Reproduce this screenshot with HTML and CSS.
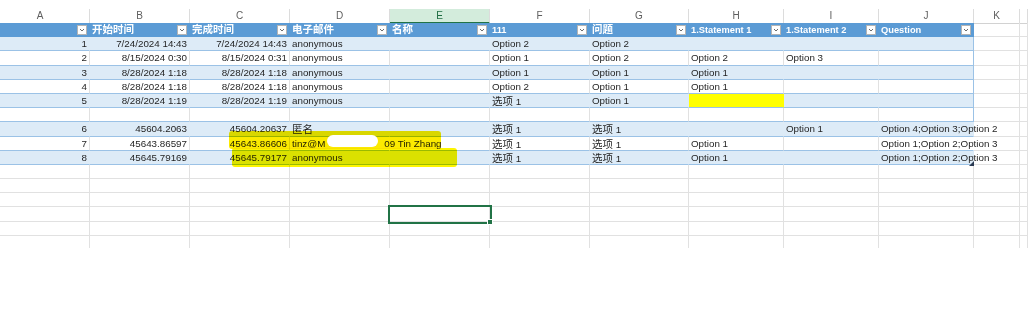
FILE: index.html
```html
<!DOCTYPE html>
<html lang="zh-CN">
<head>
    <meta charset="UTF-8">
    <meta name="viewport" content="width=device-width, initial-scale=1.0">
    <title>Form Responses</title>
    <link rel="stylesheet" href="styles.css">
</head>
<body>
    <div class="sheet">
        <div class="cols" id="cols"></div>
        <div class="grid" id="grid"></div>
        <div class="marker m7"></div>
        <div class="marker m8"></div>
        <div class="redact"></div>
        <svg class="grip" viewBox="0 0 5 5"><polygon points="5,0 5,5 0,5"/></svg>
    </div>

    <script>
        const letters = ['A', 'B', 'C', 'D', 'E', 'F', 'G', 'H', 'I', 'J', 'K', ''];
        const zh = s => `<span class="zh">${s}</span>`;
        const opt = zh('选项') + ' 1';

        const heads = ['', zh('开始时间'), zh('完成时间'), zh('电子邮件'), zh('名称'), '111', zh('问题'), '1.Statement 1', '1.Statement 2', 'Question'];
        const rows = [
            ['1', '7/24/2024 14:43', '7/24/2024 14:43', 'anonymous', '', 'Option 2', 'Option 2', '', '', ''],
            ['2', '8/15/2024 0:30', '8/15/2024 0:31', 'anonymous', '', 'Option 1', 'Option 2', 'Option 2', 'Option 3', ''],
            ['3', '8/28/2024 1:18', '8/28/2024 1:18', 'anonymous', '', 'Option 1', 'Option 1', 'Option 1', '', ''],
            ['4', '8/28/2024 1:18', '8/28/2024 1:18', 'anonymous', '', 'Option 2', 'Option 1', 'Option 1', '', ''],
            ['5', '8/28/2024 1:19', '8/28/2024 1:19', 'anonymous', '', opt, 'Option 1', '', '', ''],
            ['', '', '', '', '', '', '', '', '', ''],
            ['6', '45604.2063', '45604.20637', zh('匿名'), '', opt, opt, '', 'Option 1', 'Option 4;Option 3;Option 2'],
            ['7', '45643.86597', '45643.86606', 'tinz@M<span class="gap"></span>09 Tin Zhang', '', opt, opt, 'Option 1', '', 'Option 1;Option 2;Option 3'],
            ['8', '45645.79169', '45645.79177', 'anonymous', '', opt, opt, 'Option 1', '', 'Option 1;Option 2;Option 3']
        ];

        let colHtml = '';
        letters.forEach((l, i) => {
            colHtml += `<div class="col${i === 0 ? ' first' : ''}${l === 'E' ? ' on' : ''}">${l}</div>`;
        });
        document.getElementById('cols').innerHTML = colHtml;

        const filter = '<span class="filter"><svg viewBox="0 0 8 8"><polyline points="2,3 4,5 6,3"/></svg></span>';
        let html = '';
        heads.forEach(h => {
            html += `<div class="cell head"><span>${h}</span>${filter}</div>`;
        });
        html += '<div class="cell"></div><div class="cell"></div>';

        rows.forEach((r, ri) => {
            r.forEach((v, ci) => {
                let cls = 'cell tbl';
                if (ri % 2 === 0) cls += ' band';
                if (ci < 3) cls += ' num';
                if (ci === 9) cls += ' last';
                if (ri === 4 && ci === 7) cls += ' yellow';
                if (ri >= 6 && ci === 9) cls += ' spill';
                if (ri === 7 && ci === 3) cls += ' spill';
                html += `<div class="${cls}">${v}</div>`;
            });
            html += '<div class="cell"></div><div class="cell"></div>';
        });

        for (let i = 0; i < 6; i++) {
            for (let c = 0; c < 12; c++) {
                html += `<div class="cell${i === 3 && c === 4 ? ' active' : ''}"></div>`;
            }
        }
        document.getElementById('grid').innerHTML = html;
    </script>
</body>
</html>
```

FILE: styles.css
```css
body {
    margin: 0;
    background: #fff;
    color: #1f1f1f;
    font-family: "Liberation Sans", "Noto Sans CJK SC", sans-serif;
    font-size: 9.8px;
}
.sheet {
    position: relative;
    height: 248px;
    padding-top: 9px;
    box-sizing: border-box;
    overflow: hidden;
}
.cols, .grid {
    display: grid;
    grid-template-columns: 90px 100px 100px 100px 100px 100px 99px 95px 95px 95px 46px 1fr;
}
.cols {
    height: 14px;
}
.col {
    border-right: 1px solid #dcdcdc;
    border-bottom: 1px solid #d2d2d2;
    text-align: center;
    line-height: 13px;
    font-size: 10px;
    color: #5e5e5e;
}
.col.first { padding-right: 9px; }
.col.on {
    background: #d3ecdc;
    color: #1d6b41;
    border-bottom: 2px solid #217346;
}
.grid {
    grid-auto-rows: 14.2px;
}
.cell {
    border-right: 1px solid #e1e1e1;
    border-bottom: 1px solid #e1e1e1;
    padding: 0 2px;
    line-height: 14px;
    white-space: nowrap;
}
.num { text-align: right; }
.zh { font-size: 10.5px; }
.tbl { border-bottom-color: #9bc2e6; }
.band {
    background: #ddebf7;
    border-right-color: #ddebf7;
}
.tbl.last { border-right-color: #9bc2e6; }
.tbl.spill { border-right-color: transparent; }
.tbl.yellow {
    background: #ffff00;
    border-right-color: #ffff00;
}
.head {
    display: flex;
    align-items: center;
    justify-content: space-between;
    background: #5b9bd5;
    border-right-color: #5b9bd5;
    border-bottom-color: #5b9bd5;
    color: #fff;
    font-weight: bold;
    font-size: 9.3px;
}
.filter {
    display: flex;
    align-items: center;
    justify-content: center;
    width: 10px;
    height: 10px;
    box-sizing: border-box;
    border: 1px solid #b4b4b4;
    background: #fff;
    flex-shrink: 0;
}
.filter svg {
    width: 8px;
    height: 8px;
    fill: none;
    stroke: #6b6b6b;
    stroke-width: 1;
}
.gap {
    display: inline-block;
    width: 59px;
}
.active {
    position: relative;
    outline: 2px solid #217346;
}
.active::after {
    content: '';
    position: absolute;
    right: -4px;
    bottom: -4px;
    width: 4px;
    height: 4px;
    background: #217346;
    border: 1px solid #fff;
}
.marker {
    position: absolute;
    mix-blend-mode: multiply;
    border-radius: 3px;
}
.m7 {
    left: 229px;
    top: 131px;
    width: 212px;
    height: 18px;
    background: #fbea00;
}
.m8 {
    left: 232px;
    top: 148px;
    width: 225px;
    height: 19px;
    background: #fdf500;
}
.redact {
    position: absolute;
    left: 327px;
    top: 135px;
    width: 51px;
    height: 12px;
    background: #fff;
    border-radius: 6px;
}
.grip {
    position: absolute;
    left: 969px;
    top: 161px;
    width: 5px;
    height: 5px;
    fill: #2b3a52;
}
```
